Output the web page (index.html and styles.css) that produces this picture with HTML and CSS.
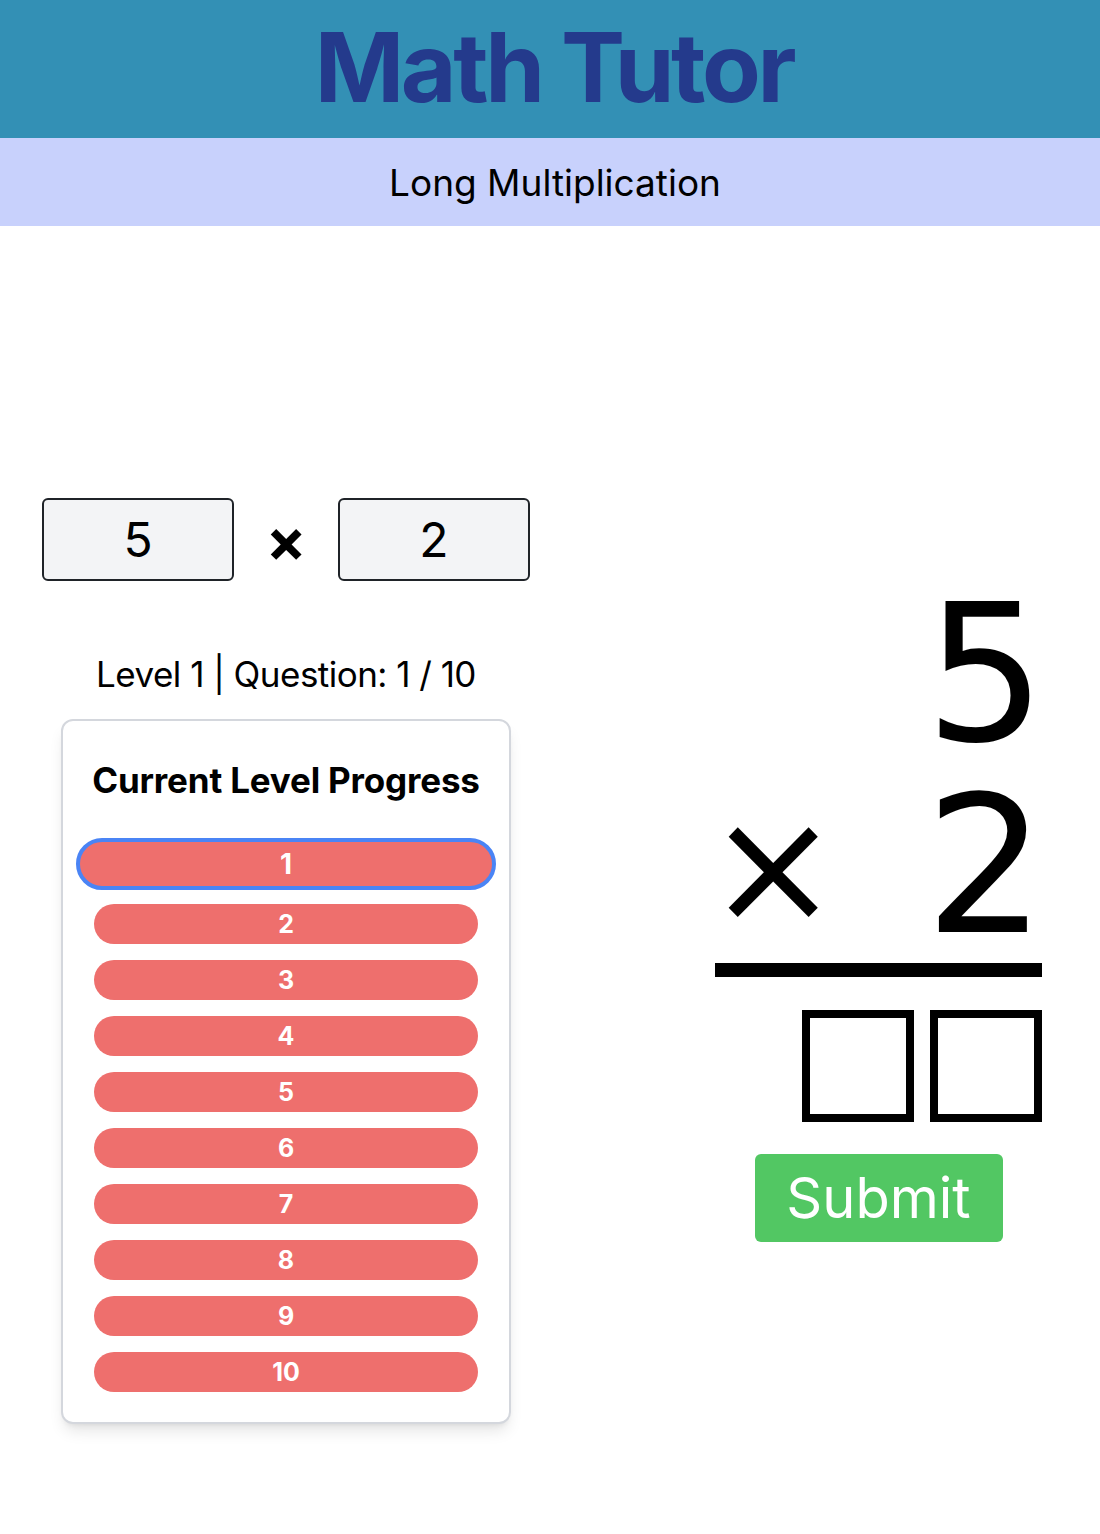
FILE: index.html
```html
<!DOCTYPE html>
<html lang="en">
<head>
<meta charset="utf-8">
<title>Math Tutor</title>
<link rel="stylesheet" href="styles.css">
</head>
<body>
<header class="title-bar">
  <h1 class="title">Math Tutor</h1>
</header>
<div class="subtitle-bar">Long Multiplication</div>
<main class="workspace">
  <section class="left-col">
    <div class="operands">
      <div class="operand">5</div>
      <span class="times">×</span>
      <div class="operand">2</div>
    </div>
    <p class="status">Level 1 | Question: 1 / 10</p>
    <div class="card">
      <h2 class="card-title">Current Level Progress</h2>
      <div class="bars">
        <div class="bar bar-current">1</div>
        <div class="bar">2</div>
        <div class="bar">3</div>
        <div class="bar">4</div>
        <div class="bar">5</div>
        <div class="bar">6</div>
        <div class="bar">7</div>
        <div class="bar">8</div>
        <div class="bar">9</div>
        <div class="bar">10</div>
      </div>
    </div>
  </section>
  <section class="right-col">
    <div class="problem">
      <div class="row row-top"><span>5</span></div>
      <div class="row row-bottom"><span class="big-times">×</span><span>2</span></div>
    </div>
    <div class="rule"></div>
    <div class="answers">
      <div class="answer-box"></div>
      <div class="answer-box"></div>
    </div>
    <button class="submit">Submit</button>
  </section>
</main>
</body>
</html>
```

FILE: styles.css
```css
* { box-sizing: border-box; }
html, body { margin: 0; padding: 0; background: #ffffff; }
body {
  font-family: Inter, "Noto Sans", "Liberation Sans", sans-serif;
  color: #000;
  width: 1100px;
  height: 1534px;
  overflow: hidden;
}
.title-bar {
  background: #3390b5;
  text-align: center;
  padding: 19px 0 23px 8px;
}
.title {
  margin: 0;
  font-size: 96px;
  line-height: 96px;
  font-weight: 700;
  letter-spacing: -0.035em;
  color: #243a8c;
}
.subtitle-bar {
  background: #c8d1fc;
  height: 88px;
  padding-left: 10px;
  display: flex;
  align-items: center;
  justify-content: center;
  font-size: 37px;
}
.workspace {
  display: flex;
  align-items: flex-start;
  padding: 272px 58px 0 42px;
}
.left-col {
  width: 488px;
  display: flex;
  flex-direction: column;
  align-items: center;
}
.operands {
  width: 488px;
  display: flex;
  align-items: center;
  justify-content: space-between;
}
.operand {
  width: 192px;
  height: 83px;
  border: 2px solid #1f2328;
  border-radius: 6px;
  background: #f3f4f6;
  display: flex;
  align-items: center;
  justify-content: center;
  font-size: 48px;
}
.times {
  font-size: 60px;
  font-weight: 700;
  line-height: 1;
}
.status {
  margin: 71px 0 0;
  font-size: 35px;
  line-height: 44px;
  letter-spacing: -0.015em;
}
.card {
  margin-top: 23px;
  width: 450px;
  border: 2px solid #d4d7dd;
  border-radius: 12px;
  background: #fff;
  box-shadow: 0 10px 15px -3px rgba(0,0,0,0.1), 0 4px 6px -4px rgba(0,0,0,0.1);
  padding: 37px 0 30px;
  display: flex;
  flex-direction: column;
  align-items: center;
}
.card-title {
  margin: 0;
  font-size: 35px;
  line-height: 44px;
  font-weight: 700;
  letter-spacing: -0.005em;
}
.bars {
  margin-top: 36px;
  display: flex;
  flex-direction: column;
  align-items: center;
  gap: 16px;
}
.bar {
  width: 384px;
  height: 40px;
  border-radius: 999px;
  background: #ee6f6d;
  color: #fff;
  font-weight: 700;
  font-size: 25px;
  display: flex;
  align-items: center;
  justify-content: center;
}
.bar-current {
  width: 420px;
  height: 52px;
  border: 4px solid #4a84f5;
  margin-bottom: -2px;
  font-size: 28px;
}
.right-col {
  margin-left: auto;
  margin-top: 81px;
  width: 327px;
  display: flex;
  flex-direction: column;
}
.problem {
  font-family: "DejaVu Sans", sans-serif;
  font-size: 190px;
  line-height: 192px;
}
.row {
  display: flex;
  justify-content: flex-end;
  height: 192px;
  margin-right: -4px;
}
.row-bottom {
  justify-content: space-between;
}
.big-times {
  font-size: 158px;
  line-height: 192px;
  margin-left: -8px;
}
.rule {
  height: 14px;
  background: #000;
}
.answers {
  margin-top: 33px;
  display: flex;
  justify-content: flex-end;
  gap: 16px;
}
.answer-box {
  width: 112px;
  height: 112px;
  border: 8px solid #000;
}
.submit {
  margin: 32px auto 0;
  width: 248px;
  height: 88px;
  border: none;
  border-radius: 6px;
  background: #52c763;
  color: #fff;
  font-family: Inter, "Noto Sans", sans-serif;
  font-size: 56px;
  padding: 0;
}
```
